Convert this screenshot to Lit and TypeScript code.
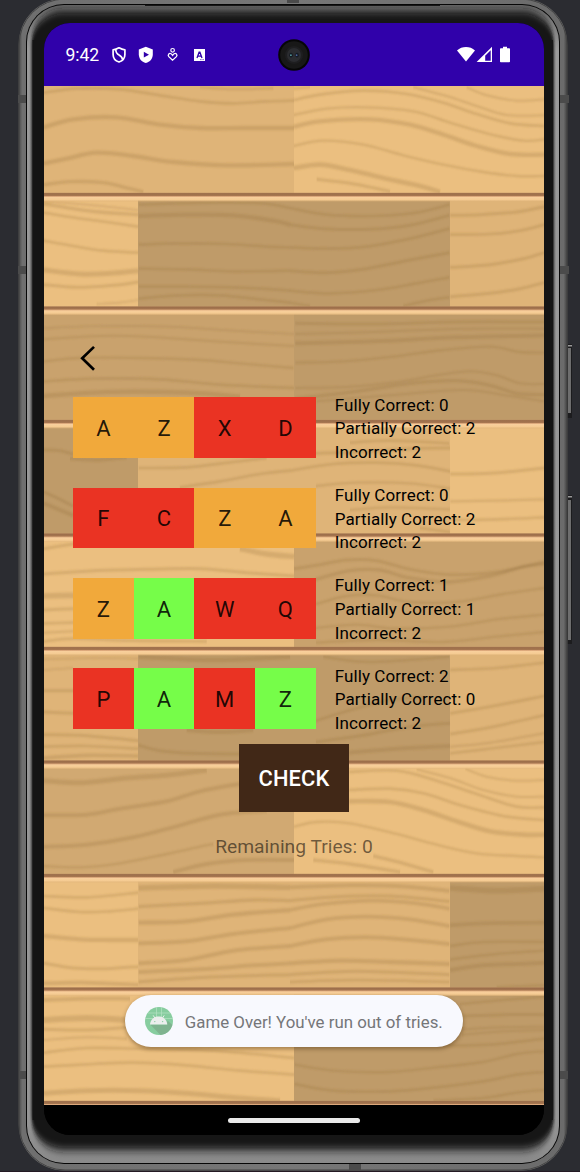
import { LitElement, html, svg, css } from "lit";
import { customElement, property } from "lit/decorators.js";

type Mark = "hit" | "near" | "miss";

interface Guess {
  letters: string;
  marks: Mark[];
  full: number;
  partial: number;
  wrong: number;
}

const GUESSES: Guess[] = [
  { letters: "AZXD", marks: ["near", "near", "miss", "miss"], full: 0, partial: 2, wrong: 2 },
  { letters: "FCZA", marks: ["miss", "miss", "near", "near"], full: 0, partial: 2, wrong: 2 },
  { letters: "ZAWQ", marks: ["near", "hit", "miss", "miss"], full: 1, partial: 1, wrong: 2 },
  { letters: "PAMZ", marks: ["miss", "hit", "miss", "hit"], full: 2, partial: 0, wrong: 2 },
];

const PALE = "#ebbf80";
const SAND = "#dfb478";
const TAN = "#d1a972";
const CLAY = "#c9a26d";
const DARK = "#bf9b69";

// Each board row: plank right edges with their fill.
const ROWS: [number, string][][] = [
  [[294, SAND], [544, PALE]],
  [[138, PALE], [450, DARK], [544, SAND]],
  [[294, CLAY], [544, DARK]],
  [[138, DARK], [450, SAND], [544, PALE]],
  [[294, PALE], [544, CLAY]],
  [[138, SAND], [450, DARK], [544, SAND]],
  [[294, TAN], [544, PALE]],
  [[138, PALE], [450, SAND], [544, DARK]],
  [[294, PALE], [544, DARK]],
];
const JOINT = 193.1;
const PITCH = 113.5;

// Grain strokes: origin of the patch, then [stroke width, x, y, x, y, ...] in third-pixel units.
const GRAIN: { x: number; y: number; lines: number[][] }[] = [
  { x: 0, y: 0, lines: [
    [8, 132, 278, 230, 266, 360, 268, 480, 286, 600, 304, 700, 310, 800, 304, 882, 302],
    [13, 132, 382, 220, 358, 350, 352, 480, 374, 600, 384, 740, 384, 882, 384],
    [13, 132, 490, 200, 476, 290, 458, 400, 468, 520, 486, 680, 496, 882, 492],
    [10, 132, 554, 210, 545, 310, 548, 390, 566, 430, 576],
    [5, 132, 604, 260, 614, 414, 630],
    [6, 600, 262, 700, 268, 820, 265],
  ] },
  { x: 870, y: 0, lines: [
    [8, 12, 300, 90, 284, 220, 272, 350, 282, 460, 308, 560, 342, 660, 370, 762, 378],
    [7, 12, 345, 110, 326, 230, 322, 370, 334, 480, 368, 590, 400, 700, 422, 762, 418],
    [13, 12, 380, 90, 364, 240, 358, 360, 374, 460, 404, 560, 438, 660, 462, 762, 464],
    [7, 12, 438, 100, 422, 220, 434, 340, 466, 460, 494, 580, 516, 680, 528, 762, 528],
    [14, 12, 504, 90, 494, 180, 510, 280, 534, 390, 558, 450, 576],
    [9, 80, 538, 180, 550, 300, 574],
    [6, 370, 262, 470, 288, 560, 318, 650, 345, 762, 346],
    [6, 530, 262, 590, 286, 680, 302, 762, 298],
    [6, 12, 266, 60, 262],
  ] },
  { x: 0, y: 600, lines: [
    [10, 132, 12, 220, 26, 300, 36, 414, 44],
    [8, 132, 38, 230, 54, 320, 66, 414, 80],
    [8, 132, 122, 220, 138, 310, 152, 414, 158],
    [15, 132, 210, 240, 222, 330, 220, 414, 212],
    [9, 132, 254, 230, 262, 340, 256, 414, 246],
    [5, 290, 312, 360, 308, 414, 300],
    [8, 416, 14, 520, 10, 660, 8, 790, 10, 870, 24],
    [13, 416, 48, 560, 44, 700, 46, 820, 62, 870, 74],
    [8, 416, 134, 540, 130, 680, 132, 800, 140, 870, 142],
    [8, 416, 206, 560, 208, 700, 214, 870, 212],
    [8, 416, 260, 560, 260, 700, 262, 820, 268, 870, 272],
    [8, 416, 296, 540, 286, 660, 286, 780, 298, 870, 308],
    [5, 132, 384, 300, 378, 500, 380, 700, 392, 882, 402],
    [6, 132, 418, 300, 408, 440, 410, 640, 424, 882, 438],
    [7, 132, 484, 240, 474, 420, 474, 600, 480, 720, 490, 880, 504],
    [8, 132, 544, 280, 536, 480, 538, 660, 554, 882, 564],
    [14, 132, 588, 320, 576, 560, 578, 720, 590],
  ] },
  { x: 870, y: 600, lines: [
    [8, 0, 24, 110, 44, 250, 48, 380, 38, 478, 14],
    [9, 0, 74, 100, 86, 240, 88, 360, 76, 478, 46],
    [8, 0, 142, 110, 146, 230, 140, 360, 116, 478, 86],
    [9, 0, 212, 110, 218, 230, 206, 360, 180, 478, 158],
    [8, 0, 272, 120, 280, 260, 270, 380, 250, 478, 232],
    [7, 0, 308, 60, 318],
    [8, 340, 318, 420, 300, 478, 292],
    [9, 481, 46, 570, 44, 680, 36, 762, 20],
    [8, 481, 104, 600, 102, 690, 92, 762, 74],
    [9, 481, 202, 600, 194, 700, 176, 762, 158],
    [9, 481, 290, 600, 280, 690, 266, 762, 248],
    [9, 16, 370, 250, 372, 500, 366, 762, 366],
    [6, 16, 402, 250, 396, 520, 386, 762, 386],
    [12, 16, 430, 250, 424, 500, 412, 762, 406],
    [7, 16, 488, 160, 484, 310, 470, 460, 450, 600, 440, 690, 456, 762, 458],
    [6, 16, 564, 180, 560, 320, 546, 440, 526, 540, 514, 620, 526, 690, 550, 762, 552],
    [10, 16, 596, 200, 574, 360, 550, 500, 542, 600, 556, 680, 580, 762, 584],
    [6, 80, 604, 300, 586, 520, 570, 660, 588, 762, 604],
  ] },
  { x: 0, y: 1320, lines: [
    [9, 132, 30, 180, 32, 219, 42],
    [9, 132, 156, 180, 178, 219, 198],
    [12, 132, 190, 180, 210, 219, 226],
    [10, 210, 56, 300, 60, 380, 52],
    [8, 416, 84, 560, 82, 700, 66, 800, 54],
    [8, 540, 142, 660, 124, 780, 102, 870, 92],
    [9, 132, 326, 220, 312],
    [9, 132, 402, 280, 392, 440, 388, 600, 386, 740, 398, 882, 408],
    [16, 720, 326, 800, 342, 882, 350],
    [17, 132, 468, 219, 466],
    [9, 132, 510, 219, 506],
    [8, 132, 550, 219, 548],
    [6, 132, 578, 219, 574],
    [8, 132, 604, 220, 596, 400, 602, 620, 604],
    [5, 132, 658, 280, 654, 414, 656],
    [5, 132, 690, 219, 684],
    [14, 416, 650, 640, 660, 870, 650],
  ] },
  { x: 870, y: 1320, lines: [
    [8, 0, 92, 130, 72, 260, 68, 380, 76, 480, 94],
    [7, 78, 138, 200, 128, 360, 130, 480, 146],
    [9, 78, 40, 220, 36, 360, 26, 480, 24],
    [8, 180, 8, 300, 2, 478, 10],
    [7, 180, 210, 300, 202, 480, 208],
    [8, 390, 264, 480, 276],
    [9, 481, 102, 600, 100, 762, 84],
    [7, 481, 184, 620, 182, 762, 178],
    [8, 481, 240, 620, 238, 762, 232],
    [9, 12, 386, 90, 374, 170, 360, 260, 362, 360, 388, 480, 404, 620, 396, 762, 366],
    [10, 78, 418, 180, 392, 270, 390, 350, 412, 470, 426, 600, 408, 700, 380, 762, 372],
    [7, 78, 492, 170, 468, 260, 466, 360, 486, 500, 486, 640, 462, 762, 444],
    [7, 78, 564, 200, 554, 320, 566, 480, 560, 620, 538, 762, 524],
    [7, 78, 608, 260, 600, 460, 606, 620, 590, 762, 576],
    [8, 100, 650, 240, 666, 478, 650],
    [8, 481, 690, 620, 684, 762, 668],
  ] },
  { x: 0, y: 2040, lines: [
    [9, 132, 32, 219, 32],
    [9, 132, 96, 219, 100],
    [9, 132, 164, 240, 166, 414, 182],
    [8, 132, 200, 260, 198, 414, 206],
    [11, 132, 234, 260, 226, 414, 228],
    [12, 560, 150, 660, 156, 760, 150],
    [9, 416, 196, 480, 212, 580, 220, 717, 222],
    [15, 132, 302, 250, 308, 380, 294, 500, 286, 620, 270],
    [12, 132, 406, 260, 404, 360, 386, 500, 364, 600, 334, 717, 312],
    [12, 132, 500, 260, 494, 400, 472, 540, 436, 660, 404, 800, 392],
    [7, 132, 558, 240, 562, 360, 550, 500, 522, 600, 500, 640, 492],
    [12, 520, 576, 620, 552, 740, 540, 882, 540],
    [8, 132, 648, 260, 652, 414, 638],
    [16, 416, 624, 640, 618, 870, 622],
    [10, 416, 680, 600, 670, 760, 660, 870, 662],
  ] },
  { x: 870, y: 2040, lines: [
    [8, 78, 122, 190, 88, 300, 60, 400, 52],
    [9, 78, 186, 220, 166, 360, 140, 480, 130],
    [12, 178, 218, 320, 206, 480, 198],
    [8, 481, 100, 620, 76, 762, 48],
    [8, 481, 162, 600, 142, 762, 106],
    [6, 481, 200, 600, 188, 762, 160],
    [7, 481, 220, 600, 206, 762, 186],
    [8, 178, 276, 320, 272, 440, 302, 560, 342, 680, 380, 762, 382],
    [8, 178, 330, 300, 326, 400, 340, 520, 378, 650, 410, 762, 420],
    [14, 178, 364, 300, 366, 400, 390, 500, 424, 600, 454, 700, 464, 762, 464],
    [7, 12, 440, 80, 426, 180, 430, 320, 462, 440, 494, 560, 520, 680, 528, 762, 532],
    [6, 380, 268, 480, 294, 580, 330, 680, 350, 762, 350],
    [6, 526, 266, 590, 290, 680, 302, 762, 300],
    [10, 70, 540, 180, 552, 330, 576],
    [10, 250, 528, 340, 550, 430, 576],
    [12, 0, 622, 180, 616, 320, 618, 478, 632],
    [9, 0, 662, 140, 650, 300, 648, 478, 664],
    [17, 481, 624, 620, 632, 762, 626],
  ] },
  { x: 0, y: 2700, lines: [
    [8, 132, 24, 240, 36, 330, 34, 414, 26],
    [13, 132, 108, 240, 118, 330, 120, 414, 120],
    [9, 132, 190, 220, 204, 320, 206, 414, 200],
    [12, 132, 250, 260, 248, 414, 254],
    [13, 416, 68, 560, 64, 700, 44, 870, 30],
    [12, 416, 130, 560, 124, 700, 102, 870, 84],
    [12, 416, 190, 560, 180, 700, 152, 870, 138],
    [12, 416, 216, 600, 208, 760, 196, 870, 190],
    [9, 416, 246, 620, 232, 870, 224],
    [12, 132, 300, 240, 296, 390, 296],
    [18, 132, 360, 260, 354, 380, 360],
    [9, 132, 388, 260, 390, 380, 382],
    [6, 132, 420, 260, 412, 380, 416],
    [8, 132, 458, 260, 444, 420, 446, 600, 450, 740, 460, 882, 474],
    [8, 132, 500, 280, 492, 400, 488, 560, 496, 720, 512, 882, 524],
    [15, 132, 580, 260, 572, 420, 572, 560, 580, 720, 594, 840, 602],
  ] },
  { x: 870, y: 2700, lines: [
    [11, 0, 30, 100, 12, 250, 2, 380, 10, 478, 26],
    [11, 0, 84, 110, 58, 230, 50, 360, 58, 478, 78],
    [12, 0, 138, 110, 118, 230, 112, 360, 120, 478, 132],
    [13, 0, 190, 150, 182, 300, 186, 478, 192],
    [9, 0, 224, 200, 214, 478, 224],
    [8, 0, 246, 200, 240, 478, 246],
    [11, 481, 76, 580, 70, 762, 68],
    [8, 481, 138, 580, 126, 762, 126],
    [7, 481, 178, 620, 162, 762, 152],
    [12, 481, 210, 580, 196, 680, 192, 762, 188],
    [8, 620, 262, 762, 256],
    [8, 510, 312, 640, 300, 762, 290],
    [9, 516, 348, 640, 344, 762, 344],
    [6, 516, 388, 640, 382, 762, 380],
    [6, 516, 404, 640, 394, 762, 390],
    [8, 440, 436, 600, 434, 762, 416],
    [7, 14, 494, 130, 512, 300, 516, 440, 502, 580, 486, 680, 462, 762, 454],
    [8, 14, 552, 130, 572, 300, 574, 440, 562, 580, 544, 680, 524, 762, 516],
    [7, 430, 602, 580, 594, 680, 578, 762, 570],
  ] },
];

function smooth(p: number[]): string {
  const n = p.length / 2;
  const at = (i: number) => {
    const k = Math.max(0, Math.min(n - 1, i));
    return [p[k * 2], p[k * 2 + 1]];
  };
  let d = `M${p[0]} ${p[1]}`;
  for (let i = 0; i < n - 1; i++) {
    const [a, b, c, e] = [at(i - 1), at(i), at(i + 1), at(i + 2)];
    d += `C${b[0] + (c[0] - a[0]) / 6} ${b[1] + (c[1] - a[1]) / 6} ${c[0] - (e[0] - b[0]) / 6} ${c[1] - (e[1] - b[1]) / 6} ${c[0]} ${c[1]}`;
  }
  return d;
}

@customElement("wood-wall")
class WoodWall extends LitElement {
  static styles = css`
    :host { display: block; }
    svg { display: block; width: 100%; height: 100%; }
  `;

  render() {
    return html`<svg viewBox="44 86 500 1019" preserveAspectRatio="none">
      <defs>
        <filter id="soft" x="-5%" y="-5%" width="110%" height="110%"><feGaussianBlur stdDeviation="1 2.4"/></filter>
        <linearGradient id="joint" x1="0" y1="0" x2="0" y2="1">
          <stop offset="0" stop-color="#b98b60" stop-opacity=".5"/>
          <stop offset=".12" stop-color="#9b6d4a"/>
          <stop offset=".34" stop-color="#a67650"/>
          <stop offset=".44" stop-color="#dba77a"/>
          <stop offset=".54" stop-color="#f8cf9c"/>
          <stop offset=".8" stop-color="#f5cb92"/>
          <stop offset="1" stop-color="#e0b47a" stop-opacity=".5"/>
        </linearGradient>
      </defs>
      ${ROWS.map((row, r) => {
        const y = r === 0 ? 86 : JOINT + (r - 1) * PITCH + 3;
        let left = 44;
        return row.map(([right, fill]) => {
          const x = left;
          left = right;
          return svg`<rect x=${x} y=${y} width=${right - x} height=${PITCH + 2} fill=${fill}/>`;
        });
      })}
      ${GRAIN.map((g) => svg`<g transform="scale(.33333) translate(${g.x} ${g.y})" fill="none" stroke="#8d6a36" stroke-opacity=".24" filter="url(#soft)">
        ${g.lines.map(([w, ...pts]) => svg`<path d=${smooth(pts)} stroke-width=${w}/>`)}
      </g>`)}
      ${ROWS.map((_, r) => svg`<rect x="44" y=${JOINT - 0.6 + r * PITCH} width="500" height="9" fill="url(#joint)"/>`)}
    </svg>`;
  }
}

@customElement("device-frame")
class DeviceFrame extends LitElement {
  static styles = css`
    :host { display: block; }
    svg { display: block; }
  `;

  render() {
    return html`<svg width="580" height="1172" viewBox="0 0 580 1172">
      <defs>
        <linearGradient id="rim" x1="0" x2="1" y1="0" y2="0">
          <stop offset="0" stop-color="#454545"/><stop offset=".007" stop-color="#6f6f6f"/>
          <stop offset=".5" stop-color="#777"/>
          <stop offset=".993" stop-color="#6b6b6b"/><stop offset="1" stop-color="#3c3c3c"/>
        </linearGradient>
        <linearGradient id="chamfer" x1="0" x2="0" y1="0" y2="1">
          <stop offset="0" stop-color="#6a6a6a"/><stop offset=".04" stop-color="#9a9a9a"/>
          <stop offset=".96" stop-color="#959595"/><stop offset="1" stop-color="#8a8a8a"/>
        </linearGradient>
        <filter id="fade" x="-5%" y="-5%" width="110%" height="110%"><feGaussianBlur stdDeviation=".8 4"/></filter>
        <clipPath id="inner"><rect x="27" y="5" width="532" height="1158" rx="37"/></clipPath>
      </defs>
      <rect width="580" height="1172" fill="#2b2c31"/>
      <rect y="1171" width="580" height="1" fill="#241a24"/>
      <g>
        <rect x="567" y="344" width="5" height="74" fill="#1c1c1e"/>
        <rect x="568" y="348" width="3" height="65" fill="#6e6e6e"/>
        <rect x="568" y="345" width="4" height="1.5" fill="#999"/>
        <rect x="567" y="495" width="5" height="149" fill="#1c1c1e"/>
        <rect x="568" y="500" width="3" height="140" fill="#6e6e6e"/>
        <rect x="568" y="496" width="4" height="1.5" fill="#999"/>
      </g>
      <rect x="18.5" y="-1.5" width="549" height="1172" rx="46" fill="url(#rim)"/>
      <rect x="19" y="-1" width="548" height="1171" rx="46" fill="none" stroke="#444" stroke-width="1"/>
      <g fill="#4b4b4b">
        <rect x="18" y="95" width="8" height="8"/><rect x="18" y="266" width="8" height="8"/>
        <rect x="19" y="1071" width="7" height="8"/><rect x="560" y="95" width="9" height="8"/>
        <rect x="560" y="266" width="9" height="8"/><rect x="560" y="1071" width="8" height="8"/>
        <rect x="287" y="0" width="12" height="3"/><rect x="349" y="1164" width="12" height="7"/>
      </g>
      <rect x="26" y="4" width="534" height="1160" rx="38" fill="#060606"/>
      <rect x="27" y="5" width="532" height="1158" rx="37" fill="url(#chamfer)"/>
      <g clip-path="url(#inner)">
        <rect x="145" y="4" width="295" height="1.8" fill="#060606"/>
        <rect x="31.5" y="11" width="522.5" height="1139" rx="32" fill="#141414" filter="url(#fade)"/>
      </g>
      <rect x="32.5" y="40" width="520.5" height="1080" fill="#141414"/>
    </svg>`;
  }
}

@customElement("status-bar")
class StatusBar extends LitElement {
  static styles = css`
    :host {
      display: flex; align-items: center; justify-content: space-between; position: relative;
      height: 63px; box-sizing: border-box; padding: 0 32px 0 21.5px; background: #3001aa; color: #fff;
    }
    .left { display: flex; align-items: center; }
    .time { font-size: 17.6px; line-height: 22px; width: 46px; white-space: nowrap; padding-top: 1px; letter-spacing: -0.1px; }
    svg { display: block; }
    .camera { position: absolute; left: 234px; top: 16px; }
  `;

  render() {
    return html`
      <div class="left">
        <span class="time">9:42</span>
        <svg width="100" height="18" viewBox="112 46 100 18">
          <path d="M119 47.8C117 49 115 49.7 113.1 49.8V54.4C113.1 58 115.4 60.8 119 62C122.6 60.8 124.9 58 124.9 54.4V49.8C123 49.7 121 49 119 47.8Z" fill="none" stroke="#fff" stroke-width="1.7" stroke-linejoin="round"/>
          <path d="M115.8 49.4C115.6 52.4 117 54 119.4 55.2C121.6 56.6 122.6 57.8 122.4 59.6" fill="none" stroke="#fff" stroke-width="1.7"/>
          <path d="M145.8 46.7L152.8 49.4V54.2C152.8 58.7 150 61.8 145.8 63C141.6 61.8 138.8 58.7 138.8 54.2V49.4Z" fill="#fff"/>
          <path d="M143.8 51.7V57.6L149 54.65Z" fill="#3001aa"/>
          <circle cx="172.6" cy="50.3" r="1.8" fill="none" stroke="#fff" stroke-width="1.2"/>
          <path d="M172.6 60.2L168.8 56.6C167.3 54.9 169.2 52.6 171.1 53.7C171.8 54.1 172.2 54.8 172.6 55.4C173 54.8 173.4 54.1 174.1 53.7C176 52.6 177.9 54.9 176.4 56.6Z" fill="none" stroke="#fff" stroke-width="1.3"/>
          <rect x="194" y="49" width="11" height="12" fill="#fff"/>
          <path d="M197 58L199.1 52.2H199.9L202 58M197.8 56.2H201.2" fill="none" stroke="#3001aa" stroke-width="1.3"/>
          <path d="M200.4 59.6H201.4M202.6 59.6H203.6" stroke="#3001aa" stroke-width=".9"/>
        </svg>
      </div>
      <svg width="56" height="18" viewBox="456 46 56 18">
        <path d="M457 50.4C461.9 45.8 470.1 45.8 475 50.4L466 61.4Z" fill="#fff"/>
        <path d="M476.6 62L492 46.8V62Z" fill="#fff"/>
        <path d="M485.2 55.8L490.7 50.2V60.7H485.2Z" fill="#3001aa"/>
        <path d="M503 46.8H507V48.2H509.2Q510 48.2 510 49V61.4Q510 62.2 509.2 62.2H500.8Q500 62.2 500 61.4V49Q500 48.2 500.8 48.2H503Z" fill="#fff"/>
      </svg>
      <svg class="camera" width="32" height="32" viewBox="0 0 32 32">
        <circle cx="16" cy="16" r="15.8" fill="#060606"/>
        <circle cx="16" cy="16" r="13.8" fill="#181818"/>
        <circle cx="16" cy="16" r="9" fill="#1e1e20"/>
        <circle cx="16" cy="16" r="7" fill="#2b2c30"/>
        <ellipse cx="13" cy="16.2" rx="1.8" ry="2.4" fill="#141a22"/>
        <ellipse cx="19" cy="16.2" rx="1.8" ry="2.4" fill="#141a22"/>
        <circle cx="12.9" cy="16.2" r=".9" fill="#55969a"/>
        <circle cx="18.6" cy="16.2" r=".9" fill="#4b629c"/>
      </svg>
    `;
  }
}

@customElement("guess-row")
class GuessRow extends LitElement {
  static styles = css`
    :host { display: flex; height: 60.6px; }
    .cells { display: grid; grid-template-columns: repeat(4, 60.7px); }
    .cell { display: flex; align-items: center; justify-content: center; font-size: 22px; color: rgba(0, 0, 0, 0.87); padding-top: 2px; }
    .hit { background: #76fd49; }
    .near { background: #f1a93b; }
    .miss { background: #ea3323; }
    .score { margin: -3.6px 0 0 19px; font-size: 17px; line-height: 23.7px; letter-spacing: 0.08px; color: #000; white-space: nowrap; }
  `;

  @property({ attribute: false }) guess!: Guess;

  render() {
    const g = this.guess;
    return html`
      <div class="cells">${[...g.letters].map((c, i) => html`<div class="cell ${g.marks[i]}">${c}</div>`)}</div>
      <div class="score">
        <div>Fully Correct: ${g.full}</div>
        <div>Partially Correct: ${g.partial}</div>
        <div>Incorrect: ${g.wrong}</div>
      </div>
    `;
  }
}

@customElement("app-root")
class AppRoot extends LitElement {
  static styles = css`
    :host { display: block; position: relative; width: 580px; height: 1172px; overflow: hidden; box-sizing: border-box; padding: 23px 36px 37px 44px; font-family: Roboto, sans-serif; }
    .frame { position: absolute; inset: 0; }
    .screen { position: relative; display: flex; flex-direction: column; height: 1112px; width: 500px; border-radius: 26px; overflow: hidden; background: #000; }
    .game { position: relative; height: 1019px; }
    .wall { position: absolute; inset: 0; }
    .content { position: relative; display: flex; flex-direction: column; padding-top: 258px; }
    .back { display: block; margin-left: 35px; }
    .board { display: flex; flex-direction: column; gap: 29.8px; padding: 25.2px 0 0 29px; }
    .check { align-self: center; margin-top: 15px; width: 109.4px; height: 68px; border: 0; padding: 2px 0 0; background: #412817; color: #fff; font: 500 21.9px Roboto, sans-serif; letter-spacing: 0.1px; }
    .tries { text-align: center; margin-top: 22.6px; font-size: 19.25px; line-height: 24px; color: rgba(0, 0, 0, 0.54); }
    .toast { position: absolute; left: 81px; top: 909px; width: 337.5px; height: 52px; border-radius: 26px; box-sizing: border-box; padding: 0 0 0 20px; display: flex; align-items: center; gap: 11.8px; background: #f8f9fe; box-shadow: 0 2px 4px rgba(70, 45, 10, 0.45); color: #757679; font-size: 16.85px; white-space: nowrap; }
    .toast span { padding-top: 2px; }
    .nav { flex: 1; display: flex; justify-content: center; padding-top: 13px; background: #000; }
    .pill { width: 132px; height: 5px; border-radius: 3px; background: #e9e9e9; }
  `;

  render() {
    return html`
      <device-frame class="frame"></device-frame>
      <div class="screen">
        <status-bar></status-bar>
        <div class="game">
          <wood-wall class="wall"></wood-wall>
          <div class="content">
            <svg class="back" width="20" height="28" viewBox="79 344.5 20 28">
              <path d="M94 347.4L82.2 358.8L94 370.2" fill="none" stroke="#000" stroke-width="2.7"/>
            </svg>
            <div class="board">${GUESSES.map((g) => html`<guess-row .guess=${g}></guess-row>`)}</div>
            <button class="check">CHECK</button>
            <div class="tries">Remaining Tries: 0</div>
          </div>
          <div class="toast">
            <svg width="28" height="28" viewBox="0 0 28 28">
              <circle cx="14" cy="14" r="14" fill="#87cd9f"/>
              <path d="M0 11.5H28M11.5 0V11M16.5 0V11M3 6H25" stroke="#b6e2c4" stroke-width=".7" fill="none"/>
              <path d="M5.2 17.5L15.5 27.9A14 14 0 0 0 27.4 18L22.5 13.5L22 17.5Z" fill="#7fb38f"/>
              <path d="M5 17.5C5.4 12.8 9 9.6 13.6 9.6S21.8 12.8 22.3 17.5Z" fill="#eceeed"/>
              <path d="M8.2 8.4L10 11.2M19.2 8.4L17.4 11.2" stroke="#eceeed" stroke-width="1"/>
              <circle cx="9.8" cy="14.6" r=".7" fill="#87cd9f"/><circle cx="17.6" cy="14.6" r=".7" fill="#87cd9f"/>
            </svg>
            <span>Game Over! You've run out of tries.</span>
          </div>
        </div>
        <div class="nav"><div class="pill"></div></div>
      </div>
    `;
  }
}
